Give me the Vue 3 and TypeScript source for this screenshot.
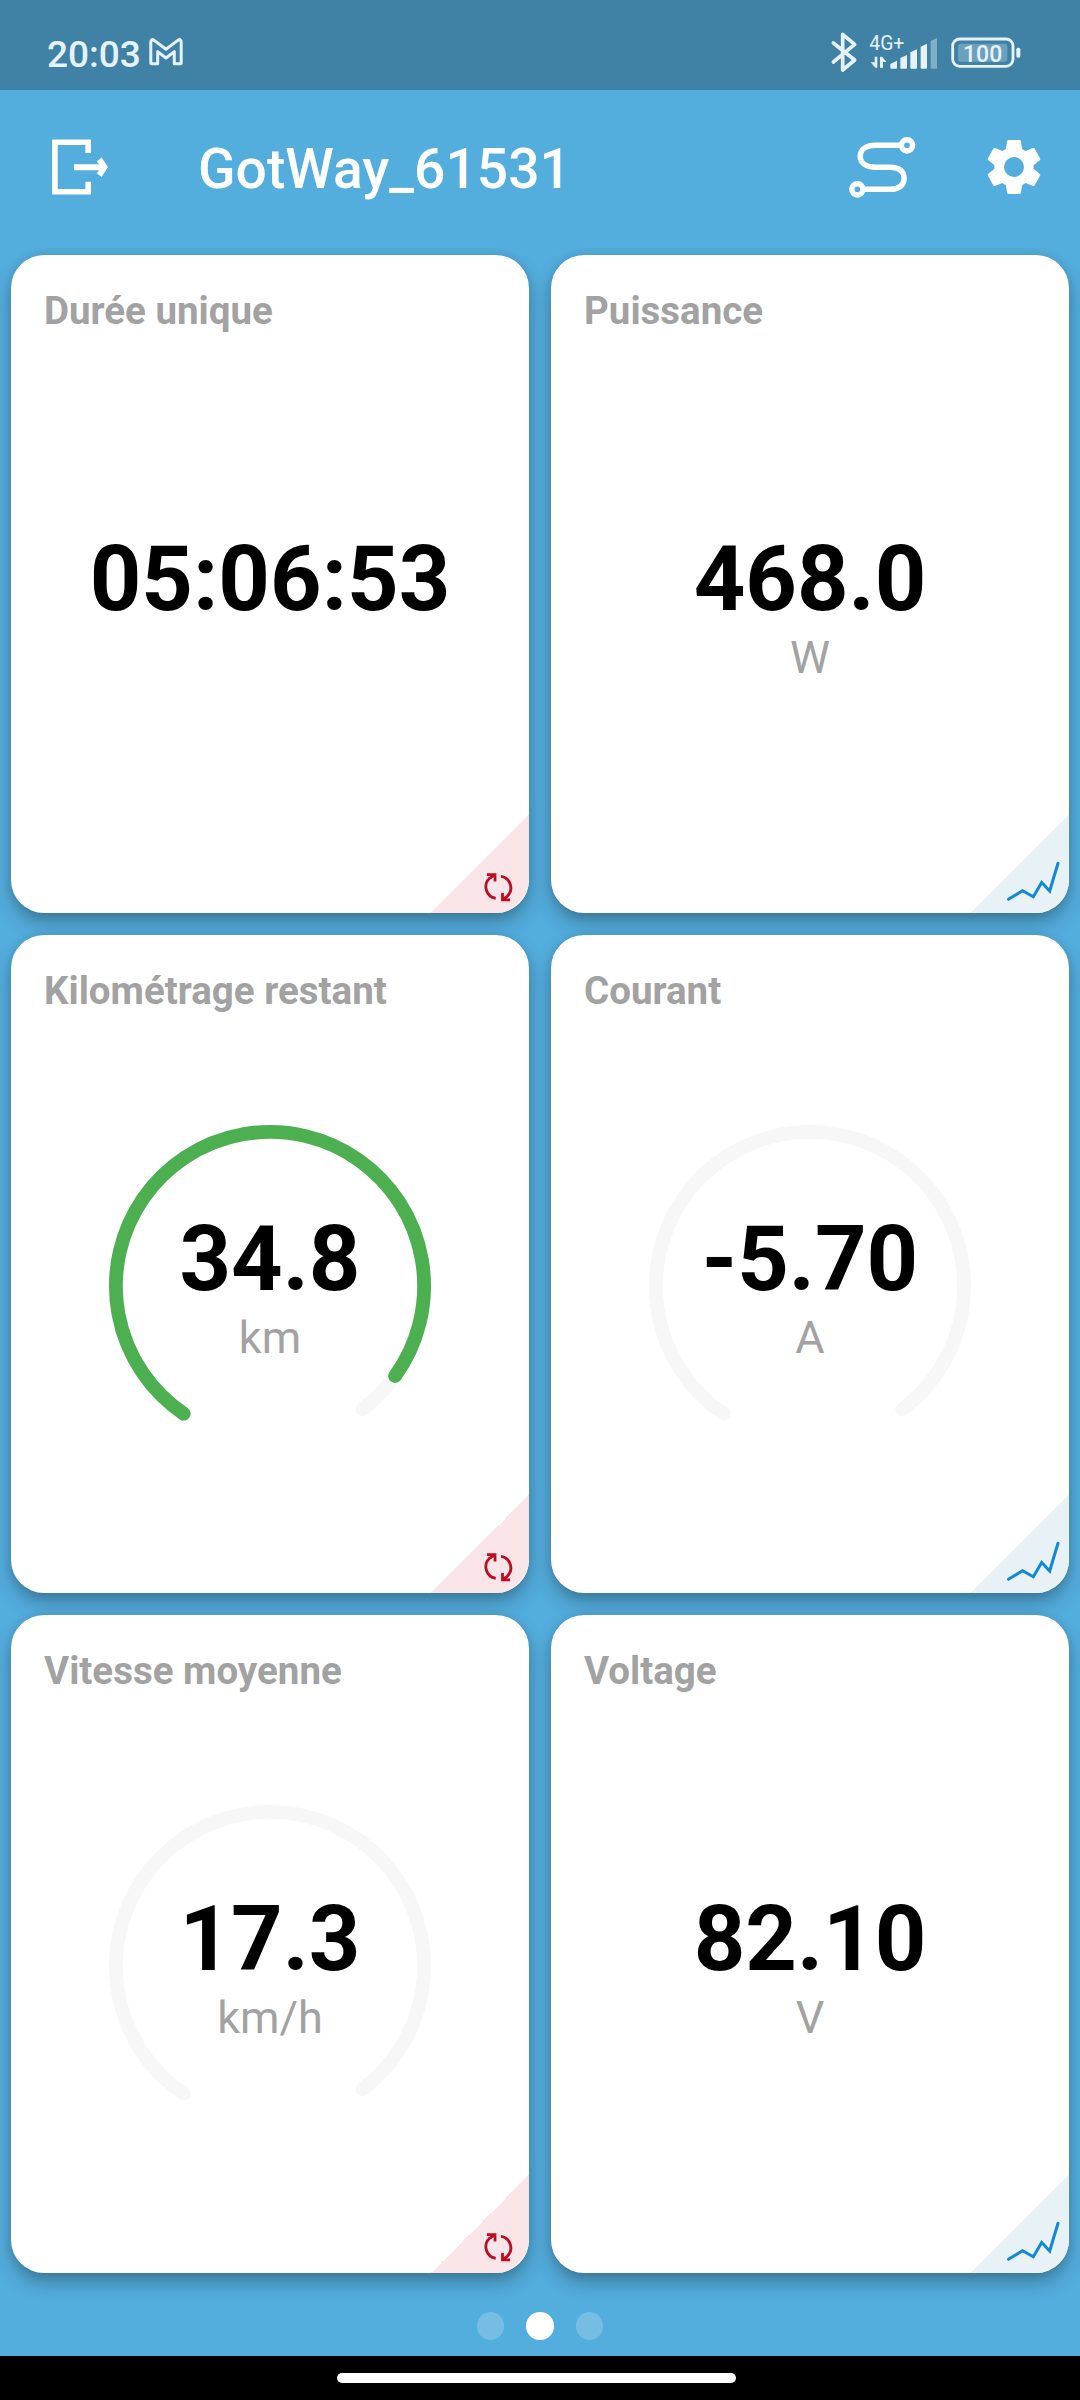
<script setup lang="ts">
interface Tile {
  title: string
  value: string
  unit?: string
  action: 'reset' | 'chart'
  gauge?: boolean
  progress?: boolean
}

const tiles: Tile[] = [
  { title: 'Durée unique', value: '05:06:53', action: 'reset' },
  { title: 'Puissance', value: '468.0', unit: 'W', action: 'chart' },
  { title: 'Kilométrage restant', value: '34.8', unit: 'km', action: 'reset', gauge: true, progress: true },
  { title: 'Courant', value: '-5.70', unit: 'A', action: 'chart', gauge: true },
  { title: 'Vitesse moyenne', value: '17.3', unit: 'km/h', action: 'reset', gauge: true },
  { title: 'Voltage', value: '82.10', unit: 'V', action: 'chart' },
]

const pages = [false, true, false]
const teeth = [0, 60, 120, 180, 240, 300]
</script>

<template>
  <div class="screen">
    <div class="status">
      <span class="clock">20:03</span>
      <svg class="mail" width="36" height="30" viewBox="0 0 36 30">
        <path d="M2.8 26.2V5.2Q2.8 1.2 6.2 3.4L18 12.3L29.8 3.4Q33.2 1.2 33.2 5.2V26.200Q33.2 26.700 32.2 26.700H26.3V14.6L18 21L9.7 14.6V26.700H3.8Q2.8 26.700 2.8 26.200Z" fill="none" stroke="#e6f2fa" stroke-width="3" stroke-linejoin="round" />
      </svg>
      <svg class="bluetooth" width="28" height="42" viewBox="150 91 84 126">
        <path d="M160 127L224 178L188 208V101L224 131L160 184" fill="none" stroke="#e6f2fa" stroke-width="11" stroke-linecap="round" stroke-linejoin="round" />
      </svg>
      <svg class="network" width="70" height="42" viewBox="266 91 210 126">
        <text x="267" y="147" font-size="58" fill="#e6f2fa">4G+</text>
        <g fill="#e6f2fa">
          <path d="M283 168H291V201H285L271 185H283Z" />
          <path d="M299 201V168H305L319 184H308V201Z" />
          <path d="M330 190L350 180V201Q350 204 347 204H333Q330 204 330 201Z" />
          <path d="M360 172L380 163V201Q380 204 377 204H363Q360 204 360 201Z" />
          <path d="M390 155L410 146V201Q410 204 407 204H393Q390 204 390 201Z" />
          <path d="M421 138L440 129V201Q440 204 437 204H424Q421 204 421 201Z" />
          <path d="M451 121L470 112V201Q470 204 467 204H454Q451 204 451 201Z" opacity=".4" />
        </g>
      </svg>
      <svg class="battery" width="70" height="42" viewBox="512 91 210 126">
        <rect x="517" y="115" width="181" height="82" rx="21" fill="none" stroke="#e6f2fa" stroke-width="8.500" />
        <rect x="533" y="129" width="148" height="54" rx="8" fill="#e6f2fa" opacity=".28" />
        <rect x="708" y="141" width="12" height="30" rx="5" fill="#e6f2fa" />
        <text x="607" y="183" font-size="69" font-weight="500" text-anchor="middle" fill="#e6f2fa">100</text>
      </svg>
    </div>

    <header class="bar">
      <svg class="exit" width="60" height="60" viewBox="50 137 60 60">
        <path d="M88.2 153V142.2H54.9V191.8H88.2V181.7" fill="none" stroke="#fff" stroke-width="5.6" />
        <path d="M74 164.3H99L96.8 161.6L101.6 157.4L108 167L101.6 176.9L96.8 173.2L99 170.2H74Z" fill="#fff" />
      </svg>
      <h1>GotWay_61531</h1>
      <svg class="route" width="70" height="66" viewBox="847 134 70 66">
        <g fill="none" stroke="#fff" stroke-width="5.5">
          <path d="M900 145.3H876C866 145.3 860.2 149.5 860.2 156.3C860.2 163 866 167.3 876 167.3H890C899.5 167.3 904.1 171.5 904.1 178.3C904.1 185 899.5 189.3 890 189.3H865" />
          <circle cx="907" cy="145.3" r="5.6" />
          <circle cx="857.4" cy="189.3" r="5.6" />
        </g>
      </svg>
      <svg class="gear" width="56" height="56" viewBox="-84 -84 168 168">
        <g fill="#fff">
          <path v-for="a in teeth" :key="a" :transform="`rotate(${a})`" d="M-25 -50L-20.500 -78Q-20 -81 -17 -81H17Q20 -81 20.500 -78L25 -50V-20H-25Z" />
        </g>
        <circle r="44.500" fill="none" stroke="#fff" stroke-width="29" />
        <circle r="30" fill="#53addd" />
      </svg>
    </header>

    <main class="grid">
      <section v-for="t in tiles" :key="t.title" class="tile">
        <h2>{{ t.title }}</h2>
        <div class="reading">
          <strong>{{ t.value }}</strong>
          <span v-if="t.unit">{{ t.unit }}</span>
        </div>
        <svg v-if="t.gauge" class="gauge" width="324" height="324" viewBox="-162 -162 324 324">
          <g fill="none" stroke-width="13.800" stroke-linecap="round">
            <path d="M-86.300 127.700A154.100 154.100 0 1 1 92.300 123.400" stroke="#f7f7f7" />
            <path v-if="t.progress" d="M-86.300 127.700A154.100 154.100 0 1 1 125.100 90" stroke="#4caf50" />
          </g>
        </svg>
        <div class="corner" :class="t.action">
          <svg v-if="t.action === 'reset'" width="98" height="98" viewBox="431 815 98 98">
            <g fill="none" stroke="#c00a22" stroke-width="2.800">
              <path d="M495.700 898.300A11.700 11.700 0 0 1 489.500 878.300L495 874.800" />
              <path d="M487 874.700H495V881.500" />
              <path d="M501 876.300A11.700 11.700 0 0 1 507.200 896.300L502.500 899.700" />
              <path d="M502.500 893V899.800H510" />
            </g>
          </svg>
          <svg v-else width="98" height="98" viewBox="971 815 98 98">
            <path d="M1008.500 899.300L1022.500 890.700L1033.300 896.700L1041.700 882.500L1049.700 891L1058 863.200" fill="none" stroke="#1588d3" stroke-width="3" stroke-linecap="round" />
          </svg>
        </div>
      </section>
    </main>

    <nav class="pager">
      <i v-for="(on, n) in pages" :key="n" :class="{ on }"></i>
    </nav>
    <div class="home"><i></i></div>
  </div>
</template>

<style>
body {
  margin: 0;
  background: #53addd;
}
</style>

<style scoped>
.screen {
  width: 1080px;
  height: 2400px;
  display: flex;
  flex-direction: column;
  overflow: hidden;
  background: #53addd;
  font-family: Roboto, "Liberation Sans", sans-serif;
}
svg {
  display: block;
  flex: none;
}
.status {
  height: 90px;
  flex: none;
  display: flex;
  align-items: flex-start;
  background: #3f82a6;
  color: #e6f2fa;
}
.clock {
  width: 101px;
  margin: 33px 0 0 47px;
  font-size: 37px;
  line-height: 44px;
  font-weight: 500;
}
.mail {
  margin-top: 37px;
}
.bluetooth {
  margin: 31px 0 0 646px;
}
.network {
  margin: 31px 0 0 11px;
}
.battery {
  margin: 31px 0 0 12px;
}
.bar {
  height: 165px;
  flex: none;
  display: flex;
  align-items: flex-start;
  color: #fff;
}
.exit {
  margin: 47px 0 0 50px;
}
h1 {
  width: 649px;
  margin: 46px 0 0 88px;
  font-size: 55.200px;
  line-height: 66px;
  font-weight: 500;
  white-space: nowrap;
}
.route {
  margin-top: 44px;
}
.gear {
  margin: 49px 0 0 69px;
}
.grid {
  height: 2018px;
  flex: none;
  padding: 0 11px;
  display: grid;
  grid-template-columns: 518px 518px;
  grid-template-rows: repeat(3, 658px);
  gap: 22px;
}
.tile {
  position: relative;
  border-radius: 33px;
  background: #fff;
  box-shadow: 0 10px 20px -2px rgba(0, 0, 0, .3), 0 1px 10px rgba(0, 0, 0, .1);
}
h2 {
  margin: 0;
  padding: 33px 33px 0;
  font-size: 38.500px;
  line-height: 46px;
  font-weight: 700;
  color: #a2a2a2;
}
.reading {
  margin-top: 199px;
  display: flex;
  flex-direction: column;
  align-items: center;
}
.reading strong {
  font-size: 90px;
  line-height: 93px;
  font-weight: 700;
  color: #000;
}
.reading span {
  margin-top: 5px;
  font-size: 45px;
  line-height: 54px;
  color: #a2a2a2;
}
.gauge {
  position: absolute;
  left: 97px;
  top: 189px;
}
.corner {
  position: absolute;
  right: 0;
  bottom: 0;
  width: 98px;
  height: 98px;
  border-bottom-right-radius: 33px;
  overflow: hidden;
}
.corner.reset {
  background: linear-gradient(135deg, transparent 50%, #fae6e9 50%);
}
.corner.chart {
  background: linear-gradient(135deg, transparent 50%, #e7f1f6 50%);
}
.pager {
  height: 83px;
  flex: none;
  padding-top: 39px;
  box-sizing: border-box;
  display: flex;
  justify-content: center;
  gap: 22px;
}
.pager i {
  width: 27.500px;
  height: 27.500px;
  border-radius: 50%;
  background: rgba(255, 255, 255, .2);
}
.pager i.on {
  background: #fff;
}
.home {
  height: 44px;
  flex: none;
  display: flex;
  background: #000;
}
.home i {
  width: 399px;
  height: 10px;
  margin: 17px 0 0 337px;
  border-radius: 5px;
  background: #fff;
}
</style>
